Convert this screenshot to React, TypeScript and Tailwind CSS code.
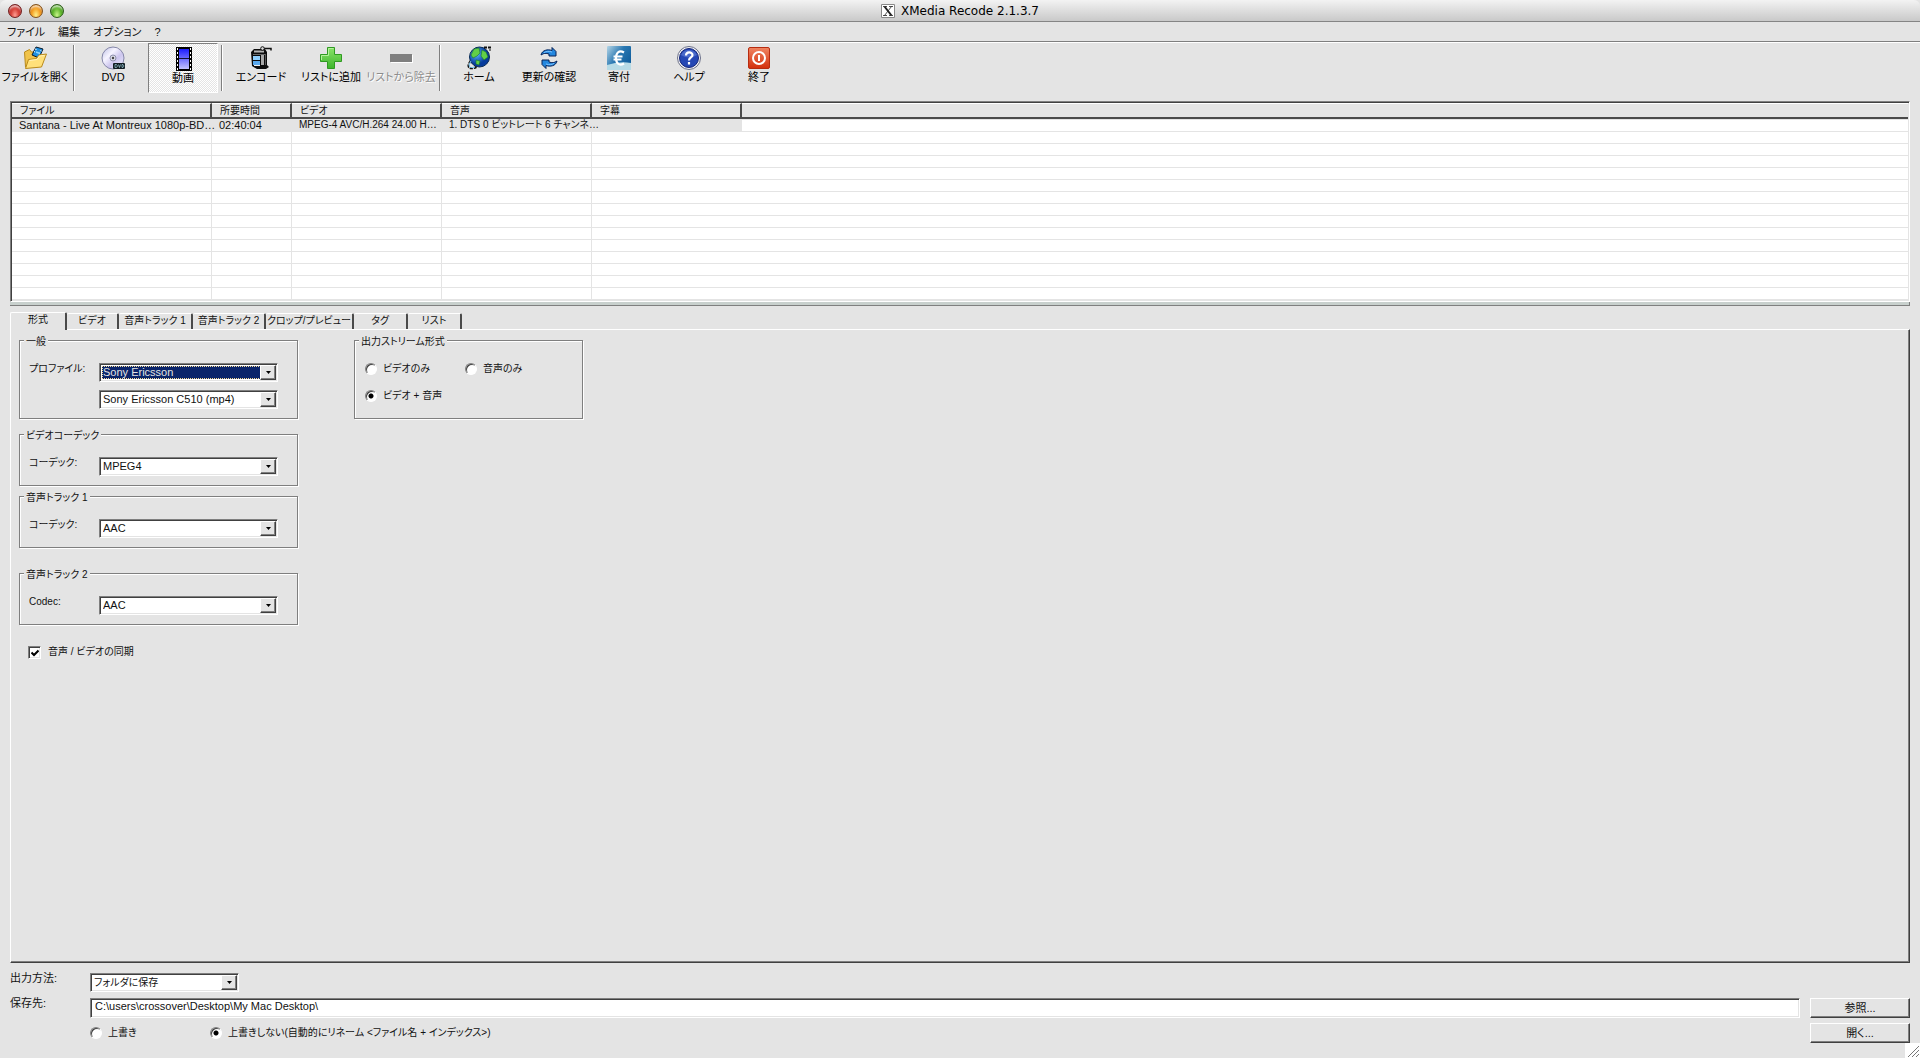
import React, { useState } from 'react';

const sunken = 'border border-t-[#7f7f7f] border-l-[#7f7f7f] border-b-white border-r-white shadow-[inset_1px_1px_0_#404040,inset_-1px_-1px_0_#e4e4e4]';
const raised = 'border border-t-white border-l-white border-b-[#404040] border-r-[#404040] shadow-[inset_-1px_-1px_0_#7f7f7f]';

function OpenIcon() {
  return (
    <svg width="24" height="24" viewBox="0 0 24 24">
      <path d="M1.500 6l5-2.500 2 2.500h6v15h-12z" fill="#f0c34a" stroke="#b98a1c" />
      <path d="M9 9l4-8 7 2-4 9z" fill="#1d8fe0" stroke="#0b1c2c" />
      <path d="M12 3l1.500.5M17.500 4.500l1 .5M11 5.500l1 .5M16 7l1 .5" stroke="#fff" />
      <path d="M13 6l4 1.500" stroke="#8bd6ff" strokeWidth="1.500" />
      <path d="M2.500 22.500l3-9 8-1 2.500-3.500 7.500-1-5 13z" fill="#ffe07a" stroke="#b98a1c" />
      <path d="M6.500 14.500l7.500-1 2.500-3.500 5-.5" fill="none" stroke="#fff3bd" />
    </svg>
  );
}
function DvdIcon() {
  return (
    <svg width="24" height="24" viewBox="0 0 24 24">
      <defs>
        <linearGradient id="disc" x1="0" y1="0" x2="1" y2="1">
          <stop offset="0" stopColor="#b9bbe2" /><stop offset=".35" stopColor="#f6f4ff" /><stop offset=".6" stopColor="#cdc6ee" /><stop offset="1" stopColor="#eef0ff" />
        </linearGradient>
      </defs>
      <circle cx="12" cy="12" r="11" fill="url(#disc)" stroke="#8587a8" />
      <circle cx="12" cy="12" r="3" fill="#dcdce8" stroke="#8f91ad" />
      <circle cx="12" cy="12" r="1.200" fill="#444" />
      <rect x="12" y="17" width="12" height="6" rx="1" fill="#111c22" />
      <path d="M14 18.500v3h1.500l1-1.500-1-1.500zM17.500 18.500l1 3 1-3M21 18.500v3h1l1-1.500-1-1.500z" fill="none" stroke="#9fd0da" strokeWidth=".7" />
    </svg>
  );
}
function FilmIcon() {
  return (
    <svg className="ml-0.5" width="24" height="24" viewBox="0 0 24 24">
      <defs><linearGradient id="film" x1="0" y1="0" x2="0" y2="1"><stop offset="0" stopColor="#1c1cff" /><stop offset="1" stopColor="#c4c4ff" /></linearGradient></defs>
      <rect x="4" y="0" width="16" height="24" fill="#000" />
      <rect x="7" y="2" width="10" height="20" fill="url(#film)" />
      <path d="M7 11.500h10" stroke="#113" />
      <path d="M5 1v23M19 1v23" stroke="#fff" strokeWidth="2" strokeDasharray="2 2" />
      <path d="M4.500 0v24M19.500 0v24" stroke="#000" />
    </svg>
  );
}
function EncodeIcon() {
  return (
    <svg width="24" height="24" viewBox="0 0 24 24">
      <path d="M2 6l3-3h11l2 3v13l2 2-3 2H8l-5-3z" fill="#0c0c0c" />
      <path d="M5 5.500h10" stroke="#b5b5b5" strokeWidth="2" />
      <path d="M4 8.500h13" stroke="#666" />
      <rect x="4" y="10" width="7" height="4" fill="#8fd0ff" /><rect x="4" y="15" width="7" height="4" fill="#5aa9ee" />
      <path d="M5 19.500h6" stroke="#eee" />
      <rect x="12" y="9" width="3" height="10" fill="#a8a8a8" /><path d="M16.500 8v11" stroke="#555" />
      <path d="M13 2.500h9v2" stroke="#111" strokeWidth="1.500" fill="none" />
      <circle cx="13.500" cy="2.500" r="1.800" fill="#ddd" stroke="#111" />
    </svg>
  );
}
function PlusIcon() {
  return (
    <svg width="24" height="24" viewBox="0 0 24 24">
      <defs><linearGradient id="plus" x1="0" y1="0" x2="0" y2="1"><stop offset="0" stopColor="#8be36a" /><stop offset="1" stopColor="#3db52c" /></linearGradient></defs>
      <path d="M8.500 1.500h7v7h7v7h-7v7h-7v-7h-7v-7h7z" fill="url(#plus)" stroke="#2f9a22" />
      <path d="M9.500 9.500v-7h5M2.500 14v-4.500h7" fill="none" stroke="#b4f29c" />
    </svg>
  );
}
function MinusIcon() {
  return <svg width="24" height="24" viewBox="0 0 24 24"><path d="M2 9h22v8H2z" fill="#fff" /><path d="M1 8h22v8H1z" fill="#7f7f7f" /></svg>;
}
function HomeIcon() {
  return (
    <svg width="24" height="24" viewBox="0 0 24 24">
      <defs><radialGradient id="globe" cx=".35" cy=".35"><stop offset="0" stopColor="#5cb8ff" /><stop offset="1" stopColor="#063b9c" /></radialGradient></defs>
      <circle cx="12.500" cy="11" r="10" fill="url(#globe)" stroke="#072a55" />
      <path d="M7 3l5-1 1 5-3 3-4 2-2-3zM15 4l4 2 2 5-4 3-3-4zM9 14l4 1-1 4-3-1z" fill="#62cf48" stroke="#157a26" strokeWidth=".6" />
      <path d="M17 1.500h6v3M3.500 15c-5 7 0 9 6 6" fill="none" stroke="#111" strokeWidth="2" strokeDasharray="3 1" />
      <path d="M4 15c-4 6-1 7.500 4 6" fill="none" stroke="#7fd0ff" />
    </svg>
  );
}
function UpdateIcon() {
  return (
    <svg width="24" height="24" viewBox="0 0 24 24">
      <path d="M4 9c1-5 7-6 11-4.500V1.500l4 4V10h-7V8C9 7 7 7 4 9z" fill="#2387df" stroke="#082257" />
      <path d="M20 15c-1 5-7 6-11 4.500v3l-4-4V14h7v2c3 1 5 1 8-1z" fill="#2387df" stroke="#082257" />
      <path d="M7 7c2-2 5-2 8-1M17 17c-2 2-5 2-8 1" fill="none" stroke="#7cc4ff" />
    </svg>
  );
}
function EuroIcon() {
  return (
    <svg width="24" height="24" viewBox="0 0 24 24">
      <defs><linearGradient id="euro" x1="0" y1="0" x2="1" y2=".7"><stop offset="0" stopColor="#b4d5e6" /><stop offset=".5" stopColor="#2a78b2" /><stop offset="1" stopColor="#0f5c9b" /></linearGradient></defs>
      <rect width="24" height="24" rx="1" fill="url(#euro)" />
      <path d="M0 19q12-4 24-2v7H0z" fill="#b7dbe6" />
      <path d="M17 6.500c-5-3-8 .5-8 5.500s3 8.500 8 5.500M6.500 10.500h9M6.500 13.500h8" fill="none" stroke="#fff" strokeWidth="2.200" />
    </svg>
  );
}
function HelpIcon() {
  return (
    <svg width="24" height="24" viewBox="0 0 24 24">
      <circle cx="12" cy="12" r="11.500" fill="#f4f4f4" stroke="#6a6f88" />
      <circle cx="12" cy="12" r="9.500" fill="#2547b4" stroke="#14257a" />
      <path d="M4 9a9 9 0 0 1 16 0q-8 5-16 0z" fill="#6f8de0" opacity=".5" />
      <path d="M9 9.500c0-4 6.500-4 6.500-.5 0 2.500-3.500 2.500-3.500 5.500M12 16v2.500" fill="none" stroke="#fff" strokeWidth="2.200" />
    </svg>
  );
}
function QuitIcon() {
  return (
    <svg width="24" height="24" viewBox="0 0 24 24">
      <defs><linearGradient id="quit" x1="0" y1="0" x2="0" y2="1"><stop offset="0" stopColor="#f08562" /><stop offset="1" stopColor="#d32f0c" /></linearGradient></defs>
      <rect x="1.500" y="1.500" width="21" height="21" rx="1.500" fill="url(#quit)" stroke="#b72c10" />
      <circle cx="12" cy="12" r="6" fill="none" stroke="#fff" strokeWidth="2" />
      <path d="M12 9v6" stroke="#fff" strokeWidth="2" />
    </svg>
  );
}

function Tool({ label, children, active, disabled }: { label: string; children: React.ReactNode; active?: boolean; disabled?: boolean }) {
  const look = active
    ? 'border-t-[#7f7f7f] border-l-[#7f7f7f] border-b-white border-r-white bg-[repeating-conic-gradient(#ffffff_0_25%,#e4e4e4_0_50%)] bg-[length:2px_2px] pt-[3px]'
    : 'border-transparent pt-0.5';
  return (
    <button disabled={disabled} className={`flex h-[50px] w-[70px] shrink-0 flex-col items-center border text-[11px] leading-[14px] whitespace-nowrap ${look} ${disabled ? 'text-[#8c8c8c] [text-shadow:1px_1px_0_#fff]' : ''}`}>
      {children}
      <span>{label}</span>
    </button>
  );
}
const Sep = () => <div className="mx-[3px] mt-0.5 h-[46px] w-0.5 shrink-0 border-r border-l border-r-white border-l-[#7f7f7f]" />;

function Combo({ value, label, width, focused, kana }: { value: string; label: string; width: string; focused?: boolean; kana?: boolean }) {
  return (
    <div className={`relative h-[19px] bg-white p-0.5 ${sunken} ${width}`}>
      <select aria-label={label} className={`block h-[13px] w-full appearance-none pl-px leading-[13px] ${kana ? 'text-[10px]' : 'text-[11px]'} ${focused ? 'bg-[#0a246a] text-[#e4e4e4] outline-1 -outline-offset-1 outline-[#f5db95] outline-dotted' : 'bg-white outline-none'}`}>
        <option>{value}</option>
      </select>
      <span className={`pointer-events-none absolute top-px right-px flex h-[15px] w-4 items-center justify-center bg-[#e4e4e4] ${raised}`}>
        <svg width="5" height="3" viewBox="0 0 5 3"><path d="M0 0h5L2.500 3z" /></svg>
      </span>
    </div>
  );
}

function Group({ title, height, width, children }: { title: string; height: string; width: string; children: React.ReactNode }) {
  return (
    <fieldset className={`relative border border-[#7f7f7f] shadow-[1px_1px_0_#fff,inset_1px_1px_0_#fff] ${height} ${width}`}>
      <legend className="absolute -top-2 left-1 bg-[#e4e4e4] px-0.5 leading-[18px]">{title}</legend>
      {children}
    </fieldset>
  );
}

function Row({ label, children }: { label: string; children: React.ReactNode }) {
  return (
    <div className="flex items-start pt-[22px] pl-[9px]">
      <span className="-mt-[3px] w-[70px] shrink-0 leading-[18px]">{label}</span>
      {children}
    </div>
  );
}

function Radio({ name, label, checked }: { name: string; label: string; checked?: boolean }) {
  return (
    <label className="flex items-center gap-1.5 text-[10px] leading-4 whitespace-nowrap">
      <input type="radio" name={name} defaultChecked={checked} className="size-3 appearance-none rounded-full border border-t-[#7f7f7f] border-r-white border-b-white border-l-[#7f7f7f] bg-white shadow-[inset_1px_1px_0_#404040] checked:bg-[radial-gradient(circle,#000_2px,#fff_3px)]" />
      {label}
    </label>
  );
}

const tabs = [
  ['形式', 'w-[57px]'], ['ビデオ', 'w-[52px]'], ['音声トラック 1', 'w-[74px]'], ['音声トラック 2', 'w-[73px]'],
  ['クロップ/プレビュー', 'w-[88px]'], ['タグ', 'w-[54px]'], ['リスト', 'w-[54px]'],
];
const headers = ['ファイル', '所要時間', 'ビデオ', '音声', '字幕', ''];
const record = ['Santana - Live At Montreux 1080p-BD…', '02:40:04', 'MPEG-4 AVC/H.264 24.00 H…', '1. DTS 0 ビットレート 6 チャンネ…', '', ''];
const blanks = Array.from({ length: 14 }, (_, i) => i);

export default function App() {
  const [tab, setTab] = useState(0);
  return (
    <div className="flex h-screen flex-col overflow-hidden bg-[#e4e4e4] font-['Liberation_Sans','Noto_Sans_CJK_JP',sans-serif] text-[11px] text-[#111] [font-feature-settings:'palt']">
      <header className="relative flex h-[22px] shrink-0 items-center justify-center gap-1.5 rounded-t-md border-b border-[#858585] bg-linear-to-b from-[#f3f3f3] to-[#c9c9c9] font-['DejaVu_Sans',sans-serif] text-xs text-black">
        <div className="absolute left-2 flex gap-[7px]">
          <button aria-label="Close" className="size-3.5 rounded-full border border-[#702020] bg-[radial-gradient(ellipse_at_50%_85%,#ff9d92_0,#d8453c_45%,#a01c1c_100%)] shadow-[inset_0_3px_2px_-1px_#ffffffb0]" />
          <button aria-label="Minimize" className="size-3.5 rounded-full border border-[#80501c] bg-[radial-gradient(ellipse_at_50%_85%,#fff08a_0,#f5a024_50%,#b8610c_100%)] shadow-[inset_0_3px_2px_-1px_#ffffffb0]" />
          <button aria-label="Zoom" className="size-3.5 rounded-full border border-[#2c5c18] bg-[radial-gradient(ellipse_at_50%_85%,#c8f58a_0,#5fb52c_50%,#2c7a12_100%)] shadow-[inset_0_3px_2px_-1px_#ffffffb0]" />
        </div>
        <svg width="14" height="14" viewBox="0 0 14 14"><path d="M.5.5h13v13H.5z" fill="#fff" stroke="#888" /><path d="M3.500 2.500l7 9" stroke="#222" strokeWidth="2" /><path d="M10.500 2.500l-7 9M2 2.500h4M8 2.500h4M2 11.500h4M8 11.500h4" stroke="#222" strokeWidth=".8" /></svg>
        <h1>XMedia Recode 2.1.3.7</h1>
      </header>

      <nav className="flex h-5 shrink-0 items-center gap-[13px] border-b border-[#7f7f7f] pl-[7px] leading-4">
        <button>ファイル</button><button>編集</button><button>オプション</button><button>?</button>
      </nav>

      <div className="flex h-[59px] shrink-0 border-t border-white text-black">
        <Tool label="ファイルを開く"><OpenIcon /></Tool>
        <Sep />
        <Tool label="DVD"><DvdIcon /></Tool>
        <Tool label="動画" active><FilmIcon /></Tool>
        <Sep />
        <Tool label="エンコード"><EncodeIcon /></Tool>
        <Tool label="リストに追加"><PlusIcon /></Tool>
        <Tool label="リストから除去" disabled><MinusIcon /></Tool>
        <Sep />
        <Tool label="ホーム"><HomeIcon /></Tool>
        <Tool label="更新の確認"><UpdateIcon /></Tool>
        <Tool label="寄付"><EuroIcon /></Tool>
        <Tool label="ヘルプ"><HelpIcon /></Tool>
        <Tool label="終了"><QuitIcon /></Tool>
      </div>

      <div className={`mx-2.5 h-[201px] shrink-0 bg-white p-px ${sunken}`}>
        <table className="w-full table-fixed border-separate border-spacing-0 text-left">
          <colgroup><col className="w-[200px]" /><col className="w-20" /><col className="w-[150px]" /><col className="w-[150px]" /><col className="w-[150px]" /><col /></colgroup>
          <thead>
            <tr>
              {headers.map((h, i) => (
                <th key={i} className={`h-4 border-t border-b-2 border-t-white border-b-[#4a4a4a] bg-[#e4e4e4] py-0 pl-2 text-[10px] leading-3 font-normal ${i < 5 ? 'border-r-2 border-r-[#4a4a4a]' : ''}`}>{h}</th>
              ))}
            </tr>
          </thead>
          <tbody>
            <tr>
              {record.map((c, i) => (
                <td key={i} className={`h-[13px] border-b border-[#e4e4e4] p-0 pl-[7px] leading-3 whitespace-nowrap ${i < 5 ? 'bg-[#e4e4e4]' : 'border-t'} ${i > 1 ? 'text-[10px]' : ''}`}>{c}</td>
              ))}
            </tr>
            {blanks.map((r) => (
              <tr key={r}>
                {headers.map((_, i) => (
                  <td key={i} className={`h-3 border-b border-[#e4e4e4] p-0 ${i < 4 ? 'border-r' : ''}`} />
                ))}
              </tr>
            ))}
          </tbody>
        </table>
      </div>
      <div className="mx-2.5 h-1 shrink-0 border-r border-b border-[#7f7f7f] bg-[#c8d0cd]" />

      <main className="mx-2.5 mt-[6px] flex min-h-0 flex-1 flex-col">
        <div role="tablist" className="relative z-10 -mb-px flex h-[18px] shrink-0 items-end">
          {tabs.map(([name, width], i) => (
            <button key={name} role="tab" aria-selected={tab === i} onClick={() => setTab(i)}
              className={`flex shrink-0 items-start justify-center rounded-t-xs border-t border-r-2 border-t-white border-r-[#4a4a4a] text-[10px] leading-[14px] whitespace-nowrap ${width} ${tab === i ? 'h-[18px] border-l border-l-white bg-[#e4e4e4]' : 'mb-px h-4'}`}>
              {name}
            </button>
          ))}
        </div>
        <section role="tabpanel" className={`flex min-h-0 flex-1 items-start gap-14 pt-2.5 pl-2 text-[10px] ${raised}`}>
          <div className="flex w-[279px] flex-col">
            <Group title="一般" height="h-[79px]" width="w-[279px]">
              <Row label="プロファイル:">
                <div className="flex flex-col gap-2">
                  <Combo label="プロファイル" value="Sony Ericsson" width="w-[179px]" focused />
                  <Combo label="機種" value="Sony Ericsson C510 (mp4)" width="w-[179px]" />
                </div>
              </Row>
            </Group>
            <div className="h-[15px]" />
            <Group title="ビデオコーデック" height="h-[52px]" width="w-[279px]">
              <Row label="コーデック:"><Combo label="ビデオコーデック" value="MPEG4" width="w-[179px]" /></Row>
            </Group>
            <div className="h-2.5" />
            <Group title="音声トラック 1" height="h-[52px]" width="w-[279px]">
              <Row label="コーデック:"><Combo label="音声トラック 1 コーデック" value="AAC" width="w-[179px]" /></Row>
            </Group>
            <div className="h-[25px]" />
            <Group title="音声トラック 2" height="h-[52px]" width="w-[279px]">
              <Row label="Codec:"><Combo label="音声トラック 2 コーデック" value="AAC" width="w-[179px]" /></Row>
            </Group>
            <label className="mt-[19px] ml-[9px] flex items-center gap-[7px] leading-4">
              <span className={`relative size-[13px] bg-white ${sunken}`}>
                <input type="checkbox" defaultChecked className="peer absolute inset-0 appearance-none" />
                <svg className="pointer-events-none absolute top-0.5 left-0.5 hidden peer-checked:block" width="8" height="8" viewBox="0 0 8 8"><path d="M.5 3.500l2.500 2.500 4.500-4.500" fill="none" stroke="#000" strokeWidth="2" /></svg>
              </span>
              音声 / ビデオの同期
            </label>
          </div>
          <Group title="出力ストリーム形式" height="h-[79px]" width="w-[229px]">
            <div className="grid grid-cols-[100px_1fr] gap-y-[11px] pt-5 pl-2.5">
              <Radio name="stream" label="ビデオのみ" />
              <Radio name="stream" label="音声のみ" />
              <Radio name="stream" label="ビデオ + 音声" checked />
            </div>
          </Group>
        </section>
      </main>

      <footer className="relative flex h-[95px] shrink-0 items-start pt-[7px] pr-2.5 pl-2.5">
        <div className="flex w-20 flex-col gap-[9px] leading-4"><span>出力方法:</span><label htmlFor="dest">保存先:</label></div>
        <div className="flex flex-1 flex-col pt-[3px]">
          <Combo label="出力方法" value="フォルダに保存" width="w-[149px]" kana />
          <input id="dest" defaultValue={'C:\\users\\crossover\\Desktop\\My Mac Desktop\\'} className={`mt-1.5 h-5 w-full bg-white pb-1 pl-1 text-[11px] outline-none ${sunken}`} />
          <div className="mt-[7px] grid grid-cols-[120px_1fr]">
            <Radio name="overwrite" label="上書き" />
            <Radio name="overwrite" label="上書きしない(自動的にリネーム <ファイル名 + インデックス>)" checked />
          </div>
        </div>
        <div className="ml-2.5 flex w-[100px] flex-col gap-[5px] pt-7">
          <button className={`h-5 ${raised}`}>参照...</button>
          <button className={`h-5 ${raised}`}>開く...</button>
        </div>
        <svg className="absolute right-0 bottom-0" width="15" height="15" viewBox="0 0 15 15"><path d="M0 0h15v15H0z" fill="#fff" /><path d="M3 14L14 3M7 14l7-7M11 14l3-3" stroke="#777" /></svg>
      </footer>
    </div>
  );
}
